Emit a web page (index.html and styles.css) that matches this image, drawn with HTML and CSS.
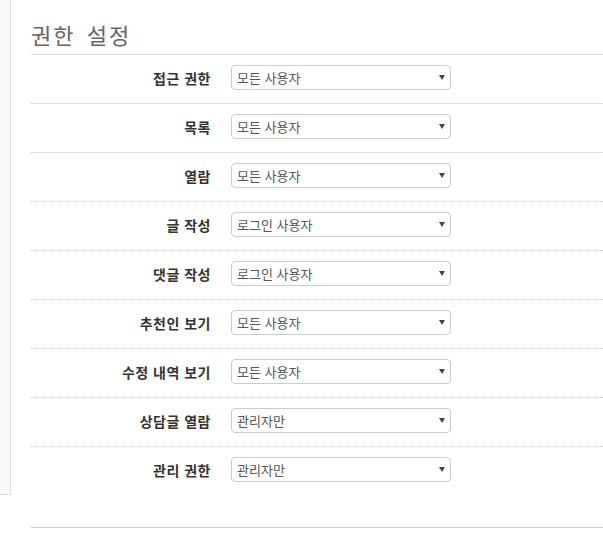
FILE: index.html
```html
<!DOCTYPE html>
<html lang="ko">
<head>
    <meta charset="UTF-8">
    <meta name="viewport" content="width=device-width, initial-scale=1.0">
    <title>권한 설정</title>
    <link rel="stylesheet" href="styles.css">
</head>
<body>
    <div class="layout">
        <div class="sidebar"></div>
        <div class="content">
            <h2 class="section-title">권한 설정</h2>
            <div class="form-row">
                <label>접근 권한</label>
                <div class="select"><span>모든 사용자</span><svg width="6" height="5" viewBox="0 0 6 5"><path d="M0 0H6L3 5Z" fill="#444"/></svg></div>
            </div>
            <div class="form-row">
                <label>목록</label>
                <div class="select"><span>모든 사용자</span><svg width="6" height="5" viewBox="0 0 6 5"><path d="M0 0H6L3 5Z" fill="#444"/></svg></div>
            </div>
            <div class="form-row">
                <label>열람</label>
                <div class="select"><span>모든 사용자</span><svg width="6" height="5" viewBox="0 0 6 5"><path d="M0 0H6L3 5Z" fill="#444"/></svg></div>
            </div>
            <div class="form-row">
                <label>글 작성</label>
                <div class="select"><span>로그인 사용자</span><svg width="6" height="5" viewBox="0 0 6 5"><path d="M0 0H6L3 5Z" fill="#444"/></svg></div>
            </div>
            <div class="form-row">
                <label>댓글 작성</label>
                <div class="select"><span>로그인 사용자</span><svg width="6" height="5" viewBox="0 0 6 5"><path d="M0 0H6L3 5Z" fill="#444"/></svg></div>
            </div>
            <div class="form-row">
                <label>추천인 보기</label>
                <div class="select"><span>모든 사용자</span><svg width="6" height="5" viewBox="0 0 6 5"><path d="M0 0H6L3 5Z" fill="#444"/></svg></div>
            </div>
            <div class="form-row">
                <label>수정 내역 보기</label>
                <div class="select"><span>모든 사용자</span><svg width="6" height="5" viewBox="0 0 6 5"><path d="M0 0H6L3 5Z" fill="#444"/></svg></div>
            </div>
            <div class="form-row">
                <label>상담글 열람</label>
                <div class="select"><span>관리자만</span><svg width="6" height="5" viewBox="0 0 6 5"><path d="M0 0H6L3 5Z" fill="#444"/></svg></div>
            </div>
            <div class="form-row">
                <label>관리 권한</label>
                <div class="select"><span>관리자만</span><svg width="6" height="5" viewBox="0 0 6 5"><path d="M0 0H6L3 5Z" fill="#444"/></svg></div>
            </div>
        </div>
    </div>
    <div class="footer-line"></div>
</body>
</html>
```

FILE: styles.css
```css
body {
    margin: 0;
    font-family: "Noto Sans CJK KR", "Noto Sans", sans-serif;
    color: #333;
    background-color: white;
    overflow: hidden;
}
.layout {
    display: flex;
}
.sidebar {
    width: 10px;
    background-color: #fafafa;
    border-right: 1px solid #ddd;
    border-bottom: 1px solid #ddd;
}
.content {
    flex: 1;
    margin-left: 20px;
}
.section-title {
    margin: 20px 0 0;
    padding-bottom: 6px;
    font-size: 22px;
    line-height: 28px;
    font-weight: normal;
    color: #666;
    letter-spacing: 2px;
    word-spacing: 3px;
    border-bottom: 1px solid #ddd;
}
.form-row {
    display: flex;
    align-items: center;
    padding: 10px 0 13px;
    border-bottom: 1px dotted #ccc;
}
.form-row:last-child {
    border-bottom: none;
}
.form-row label {
    width: 180px;
    text-align: right;
    font-size: 14px;
    font-weight: bold;
    letter-spacing: 0.5px;
    color: #333;
}
.select {
    display: flex;
    align-items: center;
    justify-content: space-between;
    width: 220px;
    height: 25px;
    margin-left: 20px;
    padding: 0 5px 0 5px;
    box-sizing: border-box;
    border: 1px solid #ccc;
    border-radius: 4px;
    font-size: 13px;
    color: #555;
}
.footer-line {
    margin: 32px 0 0 31px;
    border-top: 1px solid #ccc;
}
```
